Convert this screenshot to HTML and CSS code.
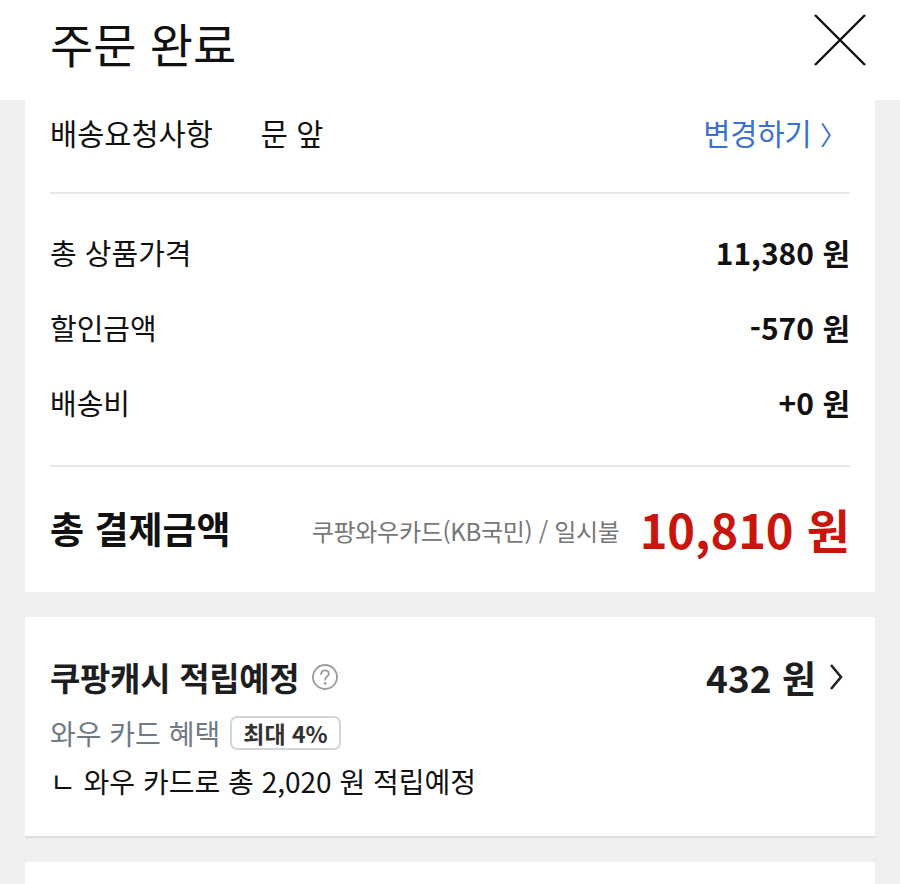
FILE: index.html
```html
<!DOCTYPE html>
<html lang="ko">
<head>
    <meta charset="UTF-8">
    <meta name="viewport" content="width=device-width, initial-scale=1.0">
    <title>주문 완료</title>
    <link rel="stylesheet" href="styles.css">
</head>
<body>
    <header class="topo">
        <h1>주문 완료</h1>
        <button class="fechar" aria-label="닫기">
            <svg width="54" height="54" viewBox="0 0 54 54">
                <path d="M2 2 L52 52 M52 2 L2 52" stroke="#111" stroke-width="2.4" fill="none"/>
            </svg>
        </button>
    </header>

    <section class="cartao resumo">
        <div class="linha pedido">
            <span class="rotulo">배송요청사항</span>
            <span class="valor-pedido">문 앞</span>
            <a class="mudar" href="#">변경하기 <span class="seta">〉</span></a>
        </div>
        <hr>
        <div class="precos">
            <div class="linha preco">
                <span>총 상품가격</span>
                <strong>11,380 원</strong>
            </div>
            <div class="linha preco">
                <span>할인금액</span>
                <strong>-570 원</strong>
            </div>
            <div class="linha preco">
                <span>배송비</span>
                <strong>+0 원</strong>
            </div>
        </div>
        <hr>
        <div class="linha total">
            <span class="total-rotulo">총 결제금액</span>
            <span class="pagamento">쿠팡와우카드(KB국민) / 일시불</span>
            <strong class="total-valor">10,810 원</strong>
        </div>
    </section>

    <section class="cartao cashback">
        <div class="linha titulo">
            <span class="titulo-texto">쿠팡캐시 적립예정
                <svg class="ajuda" width="28" height="28" viewBox="0 0 28 28">
                    <circle cx="14" cy="14" r="12" stroke="#9a9a9a" stroke-width="1.8" fill="none"/>
                    <path d="M10.2 11.2 C10.2 8.6 12 7.4 14 7.4 C16.2 7.4 17.8 8.8 17.8 10.8 C17.8 13.4 14.2 13.6 14.2 16.6" stroke="#9a9a9a" stroke-width="1.8" fill="none" stroke-linecap="round"/>
                    <circle cx="14.2" cy="20.4" r="1.3" fill="#9a9a9a"/>
                </svg>
            </span>
            <span class="cash-valor">432 원
                <svg width="16" height="28" viewBox="0 0 16 28">
                    <path d="M3 2 L13 14 L3 26" stroke="#222" stroke-width="2.6" fill="none"/>
                </svg>
            </span>
        </div>
        <div class="beneficio">
            <span>와우 카드 혜택</span>
            <span class="selo">최대 4%</span>
        </div>
        <p class="nota">ㄴ 와우 카드로 총 2,020 원 적립예정</p>
    </section>

    <section class="cartao proximo"></section>
</body>
</html>
```

FILE: styles.css
```css
body {
    margin: 0;
    background-color: #efefef;
    font-family: "Noto Sans CJK KR", "Noto Sans", sans-serif;
    color: #111;
    overflow: hidden;
}

.topo {
    height: 100px;
    background-color: #fff;
    display: flex;
    align-items: center;
    justify-content: space-between;
    padding: 0 33px 0 50px;
}

.topo h1 {
    margin: 0;
    font-size: 47px;
    font-weight: 400;
    margin-top: -16px;
}

.fechar {
    border: none;
    background: none;
    padding: 0;
    margin-top: -18px;
}

.cartao {
    background-color: #fff;
    margin: 0 25px;
    padding: 0 25px;
}

.linha {
    display: flex;
    align-items: center;
    justify-content: space-between;
}

.pedido {
    height: 64px;
    font-size: 29.5px;
    padding-bottom: 28px;
}

.valor-pedido {
    margin-left: 48px;
    flex: 1;
}

.mudar {
    color: #3b70d6;
    text-decoration: none;
    margin-right: 4px;
}

.seta {
    font-size: 26px;
}

hr {
    border: none;
    border-top: 2px solid #e3e7ea;
    margin: 0;
}

.precos {
    padding: 20px 0 26px;
}

.preco {
    height: 75px;
    font-size: 29px;
}

.preco strong {
    font-size: 30px;
    font-weight: 700;
}

.total {
    height: 122px;
    padding-bottom: 3px;
}

.total-rotulo {
    font-size: 37px;
    font-weight: 700;
}

.pagamento {
    flex: 1;
    text-align: right;
    font-size: 24px;
    color: #777;
    letter-spacing: -0.3px;
    margin-right: 20px;
    margin-top: 4px;
}

.total-valor {
    font-size: 47px;
    font-weight: 700;
    color: #c8160d;
}

.cashback {
    margin-top: 25px;
    padding-top: 40px;
    padding-bottom: 35px;
    box-shadow: 0 2px 0 #dedede;
}

.titulo {
    height: 40px;
}

.titulo-texto {
    display: flex;
    align-items: center;
    gap: 12px;
    font-size: 33px;
    font-weight: 700;
    letter-spacing: -0.3px;
    color: #1e1e1e;
}

.cash-valor {
    display: flex;
    align-items: center;
    gap: 12px;
    font-size: 37px;
    font-weight: 700;
    color: #1e1e1e;
    margin-right: 6px;
}

.beneficio {
    display: flex;
    align-items: center;
    gap: 10px;
    height: 36px;
    margin-top: 18px;
    font-size: 28px;
    color: #6f7a84;
}

.selo {
    border: 2px solid #cfd6dc;
    border-radius: 7px;
    padding: 0 11px;
    font-size: 23px;
    font-weight: 700;
    color: #333;
    line-height: 30px;
}

.nota {
    margin: 10px 0 0;
    font-size: 28px;
    line-height: 40px;
}

.proximo {
    margin-top: 26px;
    height: 60px;
}
```
